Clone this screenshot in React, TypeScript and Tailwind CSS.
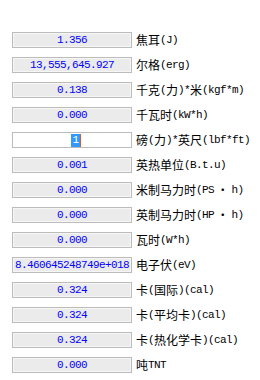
const rows: { value: string; label: string; editing?: boolean }[] = [
  { value: '1.356', label: '焦耳(J)' },
  { value: '13,555,645.927', label: '尔格(erg)' },
  { value: '0.138', label: '千克(力)*米(kgf*m)' },
  { value: '0.000', label: '千瓦时(kW*h)' },
  { value: '1', label: '磅(力)*英尺(lbf*ft)', editing: true },
  { value: '0.001', label: '英热单位(B.t.u)' },
  { value: '0.000', label: '米制马力时(PS·h)' },
  { value: '0.000', label: '英制马力时(HP·h)' },
  { value: '0.000', label: '瓦时(W*h)' },
  { value: '8.460645248749e+018', label: '电子伏(eV)' },
  { value: '0.324', label: '卡(国际)(cal)' },
  { value: '0.324', label: '卡(平均卡)(cal)' },
  { value: '0.324', label: '卡(热化学卡)(cal)' },
  { value: '0.000', label: '吨TNT' },
];

// split label into half-width (ascii) and full-width runs
function Label({ text }: { text: string }) {
  const parts = text.match(/[\x20-\x7e]+|[^\x20-\x7e]+/g) ?? [];
  return (
    <span className="flex items-center whitespace-pre text-black">
      {parts.map((p, i) =>
        /^[\x20-\x7e]+$/.test(p) ? (
          <span
            key={i}
            className="font-['Liberation_Mono',monospace] text-[11px] leading-4 tracking-[-0.6px]"
          >
            {p}
          </span>
        ) : (
          <span key={i} className="font-['Noto_Sans_CJK_SC',sans-serif] text-[12px] leading-4">
            {p === '·' ? ' · ' : p}
          </span>
        )
      )}
    </span>
  );
}

export default function App() {
  return (
    <div className="h-[380px] w-[260px] bg-white pl-3 pt-8">
      <div className="flex flex-col gap-[9px]">
        {rows.map((r, i) => (
          <div key={i} className="flex h-4 items-center gap-1">
            <div
              className={`flex h-4 w-[120px] items-center justify-center border border-[#bcbcbc] font-['Liberation_Mono',monospace] text-[11px] tracking-[-0.6px] text-[#0000ff] ${
                r.editing ? 'bg-white' : 'bg-[#ebebeb] shadow-[inset_0_0_0_1px_#f6f6f6]'
              }`}
            >
              {r.editing ? (
                <span className="flex items-center pl-2">
                  <span className="bg-[#3399ff] px-px leading-[13px] text-white">{r.value}</span>
                  <span className="h-[13px] w-px bg-[#e06010]" />
                </span>
              ) : (
                <span className="whitespace-pre leading-4">{r.value}</span>
              )}
            </div>
            <Label text={r.label} />
          </div>
        ))}
      </div>
    </div>
  );
}
